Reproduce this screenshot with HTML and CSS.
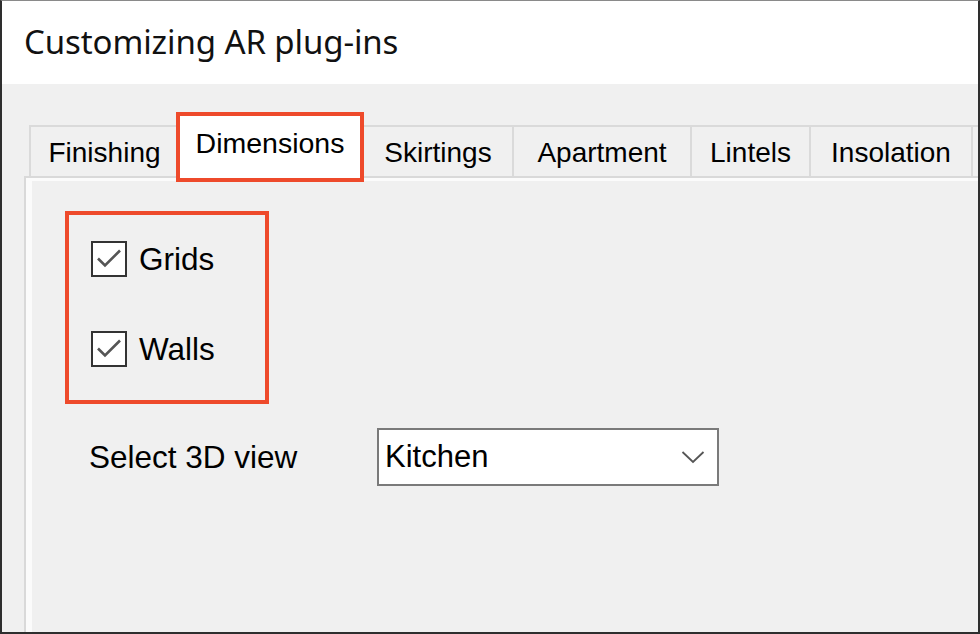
FILE: index.html
```html
<!DOCTYPE html>
<html lang="en">
<head>
<meta charset="utf-8">
<title>Customizing AR plug-ins</title>
<link rel="stylesheet" href="styles.css">
</head>
<body>
<div class="dialog">
  <header class="titlebar">
    <h1 class="title">Customizing AR plug-ins</h1>
  </header>
  <main class="client">
    <nav class="tabstrip">
      <div class="tab t-fin">Finishing</div>
      <div class="tab tab-active t-dim">Dimensions</div>
      <div class="tab t-ski">Skirtings</div>
      <div class="tab t-apt">Apartment</div>
      <div class="tab t-lin">Lintels</div>
      <div class="tab t-ins">Insolation</div>
      <div class="tab t-more"></div>
    </nav>
    <section class="panel">
      <div class="group">
        <label class="check">
          <span class="box"><svg width="32" height="32" viewBox="0 0 32 32"><path d="M5 15.5 L12 22.5 L27 7.5" fill="none" stroke="#555" stroke-width="2.6"/></svg></span>
          <span class="check-label">Grids</span>
        </label>
        <label class="check">
          <span class="box"><svg width="32" height="32" viewBox="0 0 32 32"><path d="M5 15.5 L12 22.5 L27 7.5" fill="none" stroke="#555" stroke-width="2.6"/></svg></span>
          <span class="check-label">Walls</span>
        </label>
      </div>
      <div class="select-row">
        <span class="select-label">Select 3D view</span>
        <div class="combo">
          <span class="combo-value">Kitchen</span>
          <svg class="chev" width="24" height="14" viewBox="0 0 24 14"><path d="M1.5 2 L12 12 L22.5 2" fill="none" stroke="#555" stroke-width="1.8"/></svg>
        </div>
      </div>
    </section>
  </main>
</div>
</body>
</html>
```
FILE: styles.css
```css
* { box-sizing: border-box; }
html, body { margin: 0; padding: 0; }
body {
  width: 980px;
  height: 634px;
  overflow: hidden;
  background: #ffffff;
  font-family: "Liberation Sans", Arial, sans-serif;
  color: #000;
}
.dialog {
  width: 980px;
  height: 634px;
  border: 2px solid #2e2e2e;
  border-top: 1px solid #8a8a8a;
  display: flex;
  flex-direction: column;
  overflow: hidden;
}
.titlebar {
  height: 83px;
  background: #fff;
  padding-left: 22px;
  display: flex;
  align-items: flex-start;
}
.title {
  margin: 0;
  padding-top: 21px;
  font-family: "Noto Sans", "Open Sans", sans-serif;
  font-weight: 400;
  font-size: 33px;
  letter-spacing: -0.1px;
  line-height: 40px;
  color: #111;
}
.client {
  flex: 1;
  background: #f0f0f0;
  display: flex;
  flex-direction: column;
  min-height: 0;
}
.tabstrip {
  display: flex;
  align-items: flex-end;
  padding-left: 27px;
  height: 92px;
  flex-shrink: 0;
}
.tab {
  height: 51px;
  background: #f0f0f0;
  border: 2px solid #dadada;
  border-bottom: none;
  border-right: none;
  font-size: 28px;
  display: flex;
  align-items: center;
  justify-content: center;
  padding-top: 2px;
  color: #000;
  flex-shrink: 0;
  white-space: nowrap;
}
.tab-active {
  position: relative;
  z-index: 1;
  height: 70px;
  margin-bottom: -6px;
  background: #fff;
  border: none;
  outline: 4px solid #ee4a2b;
  outline-offset: -4px;
  font-size: 28.5px;
  padding-top: 0;
  padding-bottom: 8px;
}
.t-fin { width: 149px; }
.t-dim { width: 188px; margin-left: -2px; }
.t-ski { width: 148px; border-left: none; }
.t-apt { width: 178px; }
.t-lin { width: 119px; }
.t-ins { width: 162px; }
.t-more { width: 150px; }
.panel {
  flex: 1;
  margin-left: 22px;
  margin-right: -40px;
  border-top: 2px solid #d9d9d9;
  border-left: 2px solid #d9d9d9;
  box-shadow: inset 6px 3px 0 #fbfbfb;
  display: flex;
  flex-direction: column;
  align-items: flex-start;
  padding-top: 33px;
  padding-left: 39px;
}
.group {
  width: 204px;
  height: 193px;
  border: 4px solid #ee4a2b;
  padding: 26px 0 0 22px;
  display: flex;
  flex-direction: column;
  gap: 54px;
}
.check {
  display: flex;
  align-items: center;
  gap: 12px;
  height: 36px;
}
.box {
  width: 36px;
  height: 36px;
  border: 2px solid #333;
  background: #fff;
  display: flex;
  align-items: center;
  justify-content: center;
}
.box svg { display: block; }
.check-label {
  font-size: 31.5px;
  line-height: 36px;
}
.select-row {
  margin-top: 24px;
  display: flex;
  align-items: center;
  padding-left: 24px;
}
.select-label {
  width: 288px;
  font-size: 31.5px;
}
.combo {
  width: 342px;
  height: 58px;
  border: 2px solid #7a7a7a;
  background: #fff;
  display: flex;
  align-items: center;
  justify-content: space-between;
  padding: 0 12px 0 6px;
}
.combo-value { font-size: 31px; }
.chev { display: block; }
```
